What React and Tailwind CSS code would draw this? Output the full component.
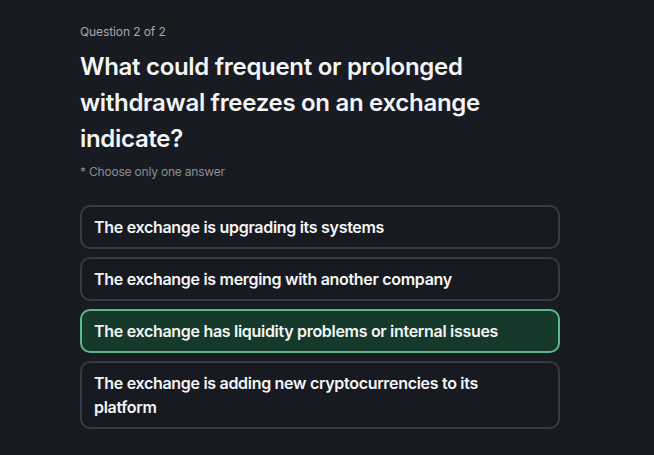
import React from "react";

const options = [
  { text: "The exchange is upgrading its systems" },
  { text: "The exchange is merging with another company" },
  { text: "The exchange has liquidity problems or internal issues", selected: true },
  { text: "The exchange is adding new cryptocurrencies to its platform" },
];

export default function App() {
  return (
    <div
      className="min-h-[455px] w-full bg-[#181b22] text-white"
      style={{ fontFamily: "Inter, 'Liberation Sans', sans-serif" }}
    >
      <div className="ml-[80px] w-[480px] pt-6">
        {/* Header */}
        <p className="text-xs leading-4 tracking-[-0.1px] text-[#a6a9b0]">Question 2 of 2</p>
        <h1 className="mt-[9px] text-2xl leading-9 font-semibold tracking-[-0.3px] text-[#f4f5f7]">
          What could frequent or prolonged withdrawal freezes on an exchange indicate?
        </h1>
        <p className="mt-[7px] text-xs leading-4 tracking-[-0.2px] text-[#8a8d94]">* Choose only one answer</p>

        {/* Options */}
        <div className="mt-[25px] flex flex-col gap-2">
          {options.map((opt) => (
            <button
              key={opt.text}
              className={
                opt.selected
                  ? "w-full rounded-[10px] border-2 border-[#5bb88b] bg-[#153a2b] py-2 pl-3 pr-6 text-left text-base leading-6 font-semibold tracking-[-0.3px] text-[#f4f5f7]"
                  : "w-full rounded-[10px] border-2 border-[#383b43] bg-[#171a20] py-2 pl-3 pr-6 text-left text-base leading-6 font-semibold tracking-[-0.3px] text-[#f4f5f7]"
              }
            >
              {opt.text}
            </button>
          ))}
        </div>
      </div>
    </div>
  );
}
